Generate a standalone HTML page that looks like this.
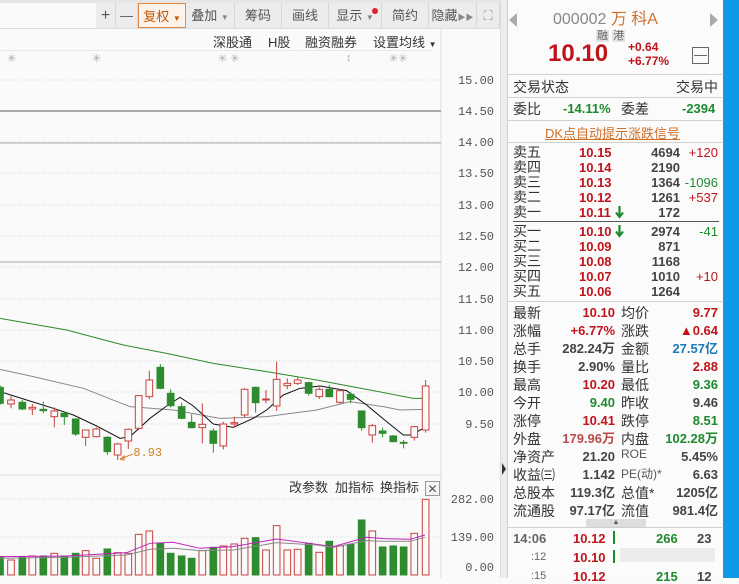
<!DOCTYPE html>
<html><head><meta charset="utf-8"><style>
*{margin:0;padding:0;box-sizing:border-box}
body{width:739px;height:578px;overflow:hidden;background:#fafafa;font-family:"Liberation Sans","Noto Sans CJK SC",sans-serif;position:relative}
.a{position:absolute;white-space:nowrap}
.btn{position:absolute;top:3px;height:25px;background:#ececec;border-right:1px solid #d8d8d8;font-size:13px;color:#555;text-align:center;line-height:25px}
.lab{font-size:14px;color:#333}
.n{font-weight:bold;font-size:13px;line-height:15px}
.r{color:#c0141b}.g{color:#1e8a2e}.k{color:#444}
.ln{position:absolute;left:508px;width:214px;height:1px;background:#d0d0d0}
</style></head><body>
<div class="a" style="left:0;top:0;width:500px;height:3px;background:#e6e6e6"></div>
<div class="btn" style="left:96px;width:20px;font-size:16px">+</div>
<div class="btn" style="left:116px;width:22px">—</div>
<div class="btn" style="left:138px;width:48px;background:#fdf3ea;border:1px solid #e08a4a;color:#c05a10">复权 <span style="font-size:8px">▼</span></div>
<div class="btn" style="left:186px;width:49px">叠加 <span style="font-size:8px;color:#888">▼</span></div>
<div class="btn" style="left:235px;width:47px">筹码</div>
<div class="btn" style="left:282px;width:47px">画线</div>
<div class="btn" style="left:329px;width:53px">显示 <span style="font-size:8px;color:#888">▼</span><span style="position:absolute;left:43px;top:5px;width:6px;height:6px;border-radius:3px;background:#e5202a"></span></div>
<div class="btn" style="left:382px;width:47px">简约</div>
<div class="btn" style="left:429px;width:48px">隐藏<span style="font-size:8px;color:#888">▶▶</span></div>
<div class="btn" style="left:477px;width:23px;color:#999">⛶</div>
<div class="a" style="left:0;top:28px;width:500px;height:1px;background:#ddd"></div>
<div class="a" style="left:213px;top:32px;font-size:13px;color:#333">深股通</div>
<div class="a" style="left:268px;top:32px;font-size:13px;color:#333">H股</div>
<div class="a" style="left:305px;top:32px;font-size:13px;color:#333">融资融券</div>
<div class="a" style="left:373px;top:32px;font-size:13px;color:#333">设置均线 <span style="font-size:8px">▼</span></div>
<div class="a" style="left:0;top:50px;width:432px;height:1px;background:#e8e8e8"></div>
<div class="a" style="left:7px;top:52px;font-size:11px;color:#aaa">✳</div>
<div class="a" style="left:92px;top:52px;font-size:11px;color:#aaa">✳</div>
<div class="a" style="left:218px;top:52px;font-size:11px;color:#aaa">✳ ✳</div>
<div class="a" style="left:346px;top:52px;font-size:11px;color:#aaa">↕</div>
<div class="a" style="left:389px;top:52px;font-size:11px;color:#aaa">✳✳</div>
<svg class="a" style="left:0;top:0" width="500" height="578">
<line x1="441" y1="29" x2="441" y2="578" stroke="#ddd"/>
<g stroke="#d4d4d4" stroke-dasharray="1,2">
<line x1="0" y1="80" x2="441" y2="80"/><line x1="0" y1="111" x2="441" y2="111"/><line x1="0" y1="142" x2="441" y2="142"/><line x1="0" y1="173" x2="441" y2="173"/><line x1="0" y1="205" x2="441" y2="205"/><line x1="0" y1="236" x2="441" y2="236"/><line x1="0" y1="267" x2="441" y2="267"/><line x1="0" y1="299" x2="441" y2="299"/><line x1="0" y1="330" x2="441" y2="330"/><line x1="0" y1="361" x2="441" y2="361"/><line x1="0" y1="392" x2="441" y2="392"/><line x1="0" y1="424" x2="441" y2="424"/><line x1="0" y1="499" x2="441" y2="499"/><line x1="0" y1="537" x2="441" y2="537"/>
</g>
<line x1="0" y1="111" x2="441" y2="111" stroke="#aaa" stroke-width="2"/>
<line x1="0" y1="143" x2="441" y2="143" stroke="#aaa"/>
<line x1="0" y1="262" x2="441" y2="262" stroke="#aaa"/>
<line x1="0" y1="475" x2="441" y2="475" stroke="#ddd"/>
<g font-family="Liberation Mono,monospace" font-size="12" fill="#555" text-anchor="end">
<text x="494" y="84">15.00</text><text x="494" y="115">14.50</text><text x="494" y="146">14.00</text><text x="494" y="177">13.50</text><text x="494" y="209">13.00</text><text x="494" y="240">12.50</text><text x="494" y="271">12.00</text><text x="494" y="303">11.50</text><text x="494" y="334">11.00</text><text x="494" y="365">10.50</text><text x="494" y="396">10.00</text><text x="494" y="428">9.50</text>
<text x="494" y="503">282.00</text><text x="494" y="541">139.00</text><text x="494" y="571">0.00</text></g>
<g transform="translate(0,300) scale(0.3333)" stroke-width="3">
<polyline fill="none" stroke="#2a8a2a" points="0,55 200,90 370,135 500,160 640,190 800,215 950,240 1100,268 1240,295 1275,295"/>
<polyline fill="none" stroke="#888" points="0,208 100,230 250,265 390,320 520,330 660,355 800,350 950,330 1050,305 1150,320 1200,330 1270,328"/>
<polyline fill="none" stroke="#111" points="0,275 80,300 160,325 220,345 290,378 360,415 390,410 450,355 500,318 540,292 580,318 640,372 700,382 760,355 800,330 850,285 900,265 960,258 1040,272 1100,315 1160,365 1210,405 1240,405 1260,390 1277,385"/>
<g id="c"></g>
<text x="400" y="468" font-size="36" fill="#d08020" font-family="Liberation Mono,monospace">8.93</text>
<line x1="398" y1="462" x2="360" y2="478" stroke="#d08020"/>
<polyline fill="#faa" stroke="#d08020" points="360,478 372,468 372,480 360,478"/>
<polyline fill="none" stroke="#c020c0" points="0,770 200,768 380,758 450,730 520,727 600,745 700,740 830,717 950,733 1000,740 1100,712 1150,716 1230,718 1275,705"/>
<polyline fill="none" stroke="#888" points="0,775 200,772 380,765 450,748 520,745 600,752 700,750 830,728 950,735 1000,742 1100,722 1150,724 1230,724 1275,712"/>
</g>
<text x="289" y="492" font-size="13" fill="#333">改参数</text><text x="335" y="492" font-size="13" fill="#333">加指标</text><text x="380" y="492" font-size="13" fill="#333">换指标</text>
<rect x="425.5" y="481.5" width="14" height="14" fill="#f4f4f4" stroke="#999"/><text x="432.5" y="493" font-size="12" fill="#555" text-anchor="middle">✕</text>
</svg>
<script>
var C=[[0,262,310,255,315,0],[33,300,312,288,325,1],[67,307,327,300,330,0],[97,322,327,312,345,1],[130,328,332,305,340,0],[163,333,350,322,382,1],[193,340,350,335,375,0],[227,357,402,355,408,0],[257,390,412,390,438,1],[289,387,410,382,412,1],[322,412,455,408,465,0],[353,432,465,428,480,1],[385,388,423,385,447,1],[416,287,385,285,390,1],[448,240,290,212,297,1],[481,202,265,192,268,0],[512,280,317,268,322,0],[545,320,355,308,358,0],[575,367,383,343,385,0],[607,373,383,310,430,1],[640,393,430,385,458,0],[670,372,438,365,448,1],[703,368,372,350,383,1],[734,268,345,265,352,1],[767,262,308,260,338,0],[798,297,300,270,310,1],[830,238,318,185,333,1],[862,250,257,235,268,1],[893,240,250,232,255,1],[926,248,280,245,287,0],[958,268,290,262,297,1],[988,268,290,255,292,0],[1020,272,307,268,310,1],[1052,283,298,278,310,0],[1085,333,383,333,392,0],[1117,377,405,372,428,1],[1148,393,400,383,412,0],[1180,408,425,405,427,0],[1211,427,430,420,445,0],[1243,380,412,378,422,1],[1277,258,390,240,398,1]];
var V=[770,780,770,768,768,760,768,760,752,775,747,758,760,703,693,730,760,768,775,752,742,738,732,715,713,750,677,750,748,730,757,724,738,733,660,693,741,738,741,700,598];
var s="";C.forEach(function(c,i){var col=c[5]?"#c8403c":"#2e8b2e";var f=c[5]?"#fafafa":"#2e8b2e";
s+='<line x1="'+c[0]+'" y1="'+c[3]+'" x2="'+c[0]+'" y2="'+c[4]+'" stroke="'+col+'"/>';
s+='<rect x="'+(c[0]-10)+'" y="'+c[1]+'" width="20" height="'+Math.max(3,c[2]-c[1])+'" fill="'+f+'" stroke="'+col+'"/>';
s+='<rect x="'+(c[0]-10)+'" y="'+V[i]+'" width="20" height="'+(825-V[i])+'" fill="'+f+'" stroke="'+col+'"/>';});
document.getElementById("c").innerHTML=s;
</script>
<div class="a" style="left:500px;top:0;width:8px;height:578px;background:#ededed;border-left:1px solid #ddd;border-right:1px solid #ccc"></div>
<div class="a" style="left:502px;top:463px;width:0;height:0;border-top:6px solid transparent;border-bottom:6px solid transparent;border-left:4px solid #333"></div>
<div class="a" style="left:508px;top:0;width:215px;height:578px;background:#fbfbfb"></div>
<div class="a" style="left:723px;top:0;width:16px;height:578px;background:#0f9ae8"></div>
<div class="a" style="left:509px;top:13px;width:0;height:0;border-top:7px solid transparent;border-bottom:7px solid transparent;border-right:8px solid #aaa"></div>
<div class="a" style="left:710px;top:13px;width:0;height:0;border-top:7px solid transparent;border-bottom:7px solid transparent;border-left:8px solid #aaa"></div>
<div class="a" style="left:553px;top:5px;font-size:16px;color:#888">000002 <span style="color:#d0702a">万 科A</span></div>
<div class="a" style="left:596px;top:27px;font-size:11px;color:#666"><span style="background:#e4e4e4;padding:0 1px">融</span> <span style="background:#e4e4e4;padding:0 1px">港</span></div>
<div class="a r" style="left:548px;top:40px;font-size:24px;font-weight:bold">10.10</div>
<div class="a r" style="left:628px;top:40px;font-size:12px;font-weight:bold;line-height:14px">+0.64<br>+6.77%</div>
<div class="a" style="left:692px;top:47px;width:17px;height:17px;border:1px solid #666;text-align:center;line-height:14px;color:#555;font-size:13px">—</div>
<div class="ln" style="top:74px"></div>
<div class="a lab" style="left:513px;top:77px">交易状态</div><div class="a lab" style="left:676px;top:77px">交易中</div>
<div class="ln" style="top:97px"></div>
<div class="a lab" style="left:513px;top:99px">委比</div><div class="a n g" style="left:563px;top:101px">-14.11%</div><div class="a lab" style="left:621px;top:99px">委差</div><div class="a n g" style="left:682px;top:101px">-2394</div>
<div class="ln" style="top:120px"></div>
<div class="a" style="left:545px;top:123px;font-size:13px;color:#d0702a;text-decoration:underline">DK点自动提示涨跌信号</div>
<div class="ln" style="top:142px"></div>
<div id="ob"></div>
<div class="a" style="left:513px;top:221px;width:206px;height:1px;background:#555"></div>
<div class="ln" style="top:301px"></div>
<div id="st"></div>
<div class="a" style="left:586px;top:519px;width:60px;height:8px;background:#ddd;font-size:7px;text-align:center;line-height:8px;color:#555">▲</div>
<div class="ln" style="top:527px"></div>
<div class="a n" style="left:513px;top:531px;color:#666">14:06</div><div class="a n r" style="left:573px;top:531px">10.12</div><div class="a" style="left:613px;top:531px;width:2px;height:13px;background:#1e8a2e"></div><div class="a n g" style="left:656px;top:531px">266</div><div class="a n k" style="left:697px;top:531px">23</div>
<div class="a" style="left:531px;top:551px;font-size:11px;color:#666">:12</div><div class="a n r" style="left:573px;top:550px">10.10</div><div class="a" style="left:613px;top:550px;width:2px;height:13px;background:#1e8a2e"></div><div class="a" style="left:620px;top:548px;width:95px;height:14px;background:#e4e4e4;opacity:.7"></div>
<div class="a" style="left:531px;top:570px;font-size:11px;color:#666">:15</div><div class="a n r" style="left:573px;top:569px">10.12</div><div class="a n g" style="left:656px;top:569px">215</div><div class="a n k" style="left:697px;top:569px">12</div>
<script>
var ob=[["卖五","10.15","4694","+120",1],["卖四","10.14","2190","",1],["卖三","10.13","1364","-1096",0],["卖二","10.12","1261","+537",1],["卖一","10.11","172","",1,1],["买一","10.10","2974","-41",0,1],["买二","10.09","871","",1],["买三","10.08","1168","",1],["买四","10.07","1010","+10",1],["买五","10.06","1264","",1]];
var h="";ob.forEach(function(o,i){var t=(i<5?145+i*15:224+(i-5)*15);
h+='<div class="a lab" style="left:513px;top:'+(t-1)+'px;line-height:16px">'+o[0]+'</div><div class="a n r" style="left:579px;top:'+t+'px">'+o[1]+'</div>'+(o[5]?'<svg class="a" style="left:615px;top:'+(t+1)+'px" width="9" height="13"><path d="M4.5 0V10M1 6.5L4.5 11L8 6.5" stroke="#1e8a2e" stroke-width="2.2" fill="none"/></svg>':'')+'<div class="a n k" style="right:59px;top:'+t+'px">'+o[2]+'</div><div class="a '+(o[4]?'r':'g')+'" style="right:21px;top:'+t+'px;font-size:13px;line-height:15px">'+o[3]+'</div>';});
document.getElementById("ob").innerHTML=h;
var st=[["最新","10.10","r","均价","9.77","r"],["涨幅","+6.77%","r","涨跌","▲0.64","r"],["总手","282.24万","k","金额","27.57亿","b"],["换手","2.90%","k","量比","2.88","r"],["最高","10.20","r","最低","9.36","g"],["今开","9.40","g","昨收","9.46","k"],["涨停","10.41","r","跌停","8.51","g"],["外盘","179.96万","rl","内盘","102.28万","g"],["净资产","21.20","k","ROE","5.45%","k"],["收益㈢","1.142","k","PE(动)*","6.63","k"],["总股本","119.3亿","k","总值*","1205亿","k"],["流通股","97.17亿","k","流值","981.4亿","k"]];
h="";st.forEach(function(o,i){var t=303+i*18;function c(x){return x=="b"?'style="color:#1a7ab8"':x=="rl"?'style="color:#b84a4a"':'class="'+x+'"'}
h+='<div class="a lab" style="left:513px;top:'+t+'px">'+o[0]+'</div><div class="a n" style="right:124px;top:'+(t+2)+'px"><span '+c(o[2])+'>'+o[1]+'</span></div><div class="a lab" style="left:621px;top:'+t+'px;'+(o[3].length>2&&o[3][0]<"z"?'font-size:12px;color:#555':'')+'">'+o[3]+'</div><div class="a n" style="right:21px;top:'+(t+2)+'px"><span '+c(o[5])+'>'+o[4]+'</span></div>';});
document.getElementById("st").innerHTML=h;
</script>
</body></html>
